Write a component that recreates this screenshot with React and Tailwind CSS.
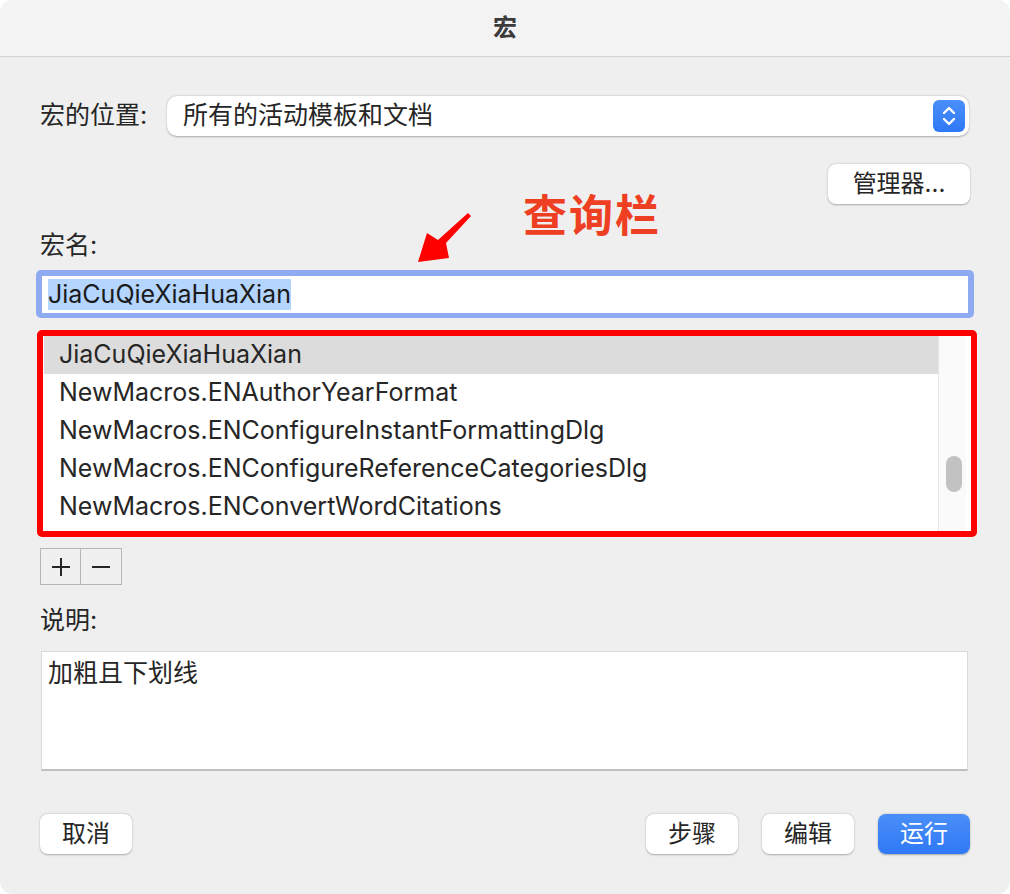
import { useState } from "react";

const macros = [
  "JiaCuQieXiaHuaXian",
  "NewMacros.ENAuthorYearFormat",
  "NewMacros.ENConfigureInstantFormattingDlg",
  "NewMacros.ENConfigureReferenceCategoriesDlg",
  "NewMacros.ENConvertWordCitations",
];

function Btn({ children, primary, className = "" }) {
  return (
    <button
      className={
        "h-[40px] w-[92px] rounded-[8px] text-[24px] leading-none shadow-[0_0.5px_2px_rgba(0,0,0,0.3)] " +
        (primary
          ? "bg-gradient-to-b from-[#4a8ff8] to-[#2f78f5] text-white"
          : "bg-white text-[#262626]") +
        " " +
        className
      }
    >
      {children}
    </button>
  );
}

export default function App() {
  const [selected, setSelected] = useState(0);
  const name = "JiaCuQieXiaHuaXian";

  return (
    <div
      className="w-[1010px] h-[894px] bg-white"
      style={{ fontFamily: '"Inter", "Noto Sans CJK SC", sans-serif' }}
    >
      <div className="relative w-full h-full rounded-[13px] overflow-hidden bg-[#efefef] flex flex-col">
        {/* title bar */}
        <div className="h-[57px] shrink-0 bg-[#f3f3f3] border-b border-[#d2d2d2] flex items-center justify-center">
          <span className="text-[24px] font-semibold text-[#3b3b3b]">宏</span>
        </div>

        <div className="flex-1 flex flex-col px-[40px] text-[25px] text-[#262626]">
          {/* location row */}
          <div className="flex items-center mt-[39px] h-[40px]">
            <span className="w-[127px]">宏的位置:</span>
            <div className="flex-1 h-[40px] mr-[1px] bg-white rounded-[10px] shadow-[0_0.5px_2px_rgba(0,0,0,0.3)] flex items-center pl-[16px] pr-[4px]">
              <span className="flex-1">所有的活动模板和文档</span>
              <div className="w-[32px] h-[32px] rounded-[6px] bg-gradient-to-b from-[#4a8ff8] to-[#2f78f5] flex items-center justify-center">
                <svg width="16" height="22" viewBox="0 0 16 22" fill="none" stroke="white" strokeWidth="2.4" strokeLinecap="round" strokeLinejoin="round">
                  <path d="M3 8 L8 3 L13 8" />
                  <path d="M3 14 L8 19 L13 14" />
                </svg>
              </div>
            </div>
          </div>

          {/* manager */}
          <div className="flex justify-end mt-[28px]">
            <button className="h-[40px] w-[142px] bg-white rounded-[8px] shadow-[0_0.5px_2px_rgba(0,0,0,0.3)] text-[24px]">
              管理器...
            </button>
          </div>

          {/* name label */}
          <div className="h-[66px] flex items-end pb-[10px]">
            <span className="leading-[30px]">宏名:</span>
          </div>

          {/* name input */}
          <div className="-mx-[4px] rounded-[5px] bg-[#8eaaf0] p-[6px] pb-[5px]">
            <div className="h-[37px] bg-white flex items-center pl-[6px]">
              <span className="bg-[#b4d5fe] text-[#1a1a1a] leading-[31px]">{name}</span>
            </div>
          </div>

          {/* list with red annotation frame */}
          <div className="mt-[12px] -ml-[3px] -mr-[7px] h-[207px] border-[6px] border-[#ff0000] rounded-[5px] bg-white flex">
            <div className="flex-1 pl-[1px] overflow-hidden">
              {macros.map((m, i) => (
                <div
                  key={m}
                  onClick={() => setSelected(i)}
                  className={
                    "h-[38px] flex items-center pl-[15px] " +
                    (selected === i ? "bg-[#dcdcdc]" : "")
                  }
                >
                  {m}
                </div>
              ))}
            </div>
            <div className="w-[28px] bg-[#fafafa] border-l border-[#e4e4e4] relative">
              <div className="absolute left-[7px] top-[120px] w-[16px] h-[36px] rounded-full bg-[#c2c2c2]" />
            </div>
            <div className="w-[5px] bg-white" />
          </div>

          {/* plus minus */}
          <div className="mt-[11px] flex">
            <div className="flex border border-[#b6b6b6] bg-[#f0f0f0]">
              <button className="w-[40px] h-[35px] flex items-center justify-center border-r border-[#b6b6b6]">
                <svg width="22" height="22" viewBox="0 0 22 22" stroke="#262626" strokeWidth="2">
                  <path d="M11 2 V20 M2 11 H20" />
                </svg>
              </button>
              <button className="w-[40px] h-[35px] flex items-center justify-center">
                <svg width="22" height="22" viewBox="0 0 22 22" stroke="#262626" strokeWidth="2">
                  <path d="M2 11 H20" />
                </svg>
              </button>
            </div>
          </div>

          {/* description */}
          <div className="mt-[20px] leading-[30px]">说明:</div>
          <div className="mt-[16px] ml-[1px] mr-[2px] h-[120px] bg-white border border-[#dadada] border-b-[2px] border-b-[#c0c0c0] px-[6px] pt-[6px] leading-[30px]">
            加粗且下划线
          </div>

          {/* buttons */}
          <div className="mt-[43px] flex items-center">
            <Btn>取消</Btn>
            <div className="flex-1" />
            <Btn>步骤</Btn>
            <Btn className="ml-[24px]">编辑</Btn>
            <Btn primary className="ml-[24px]">运行</Btn>
          </div>
        </div>

        {/* annotation overlay */}
        <span className="absolute left-[523px] top-[186px] text-[44px] leading-[60px] font-bold text-[#ee3f22] tracking-[2px]">
          查询栏
        </span>
        <svg className="absolute left-0 top-0 pointer-events-none" width="1010" height="894" viewBox="0 0 1010 894">
          <polygon points="468,213 471,216 446,243 449,258 418,262 427,233 438,240" fill="#ff0000" />
        </svg>
      </div>
    </div>
  );
}
